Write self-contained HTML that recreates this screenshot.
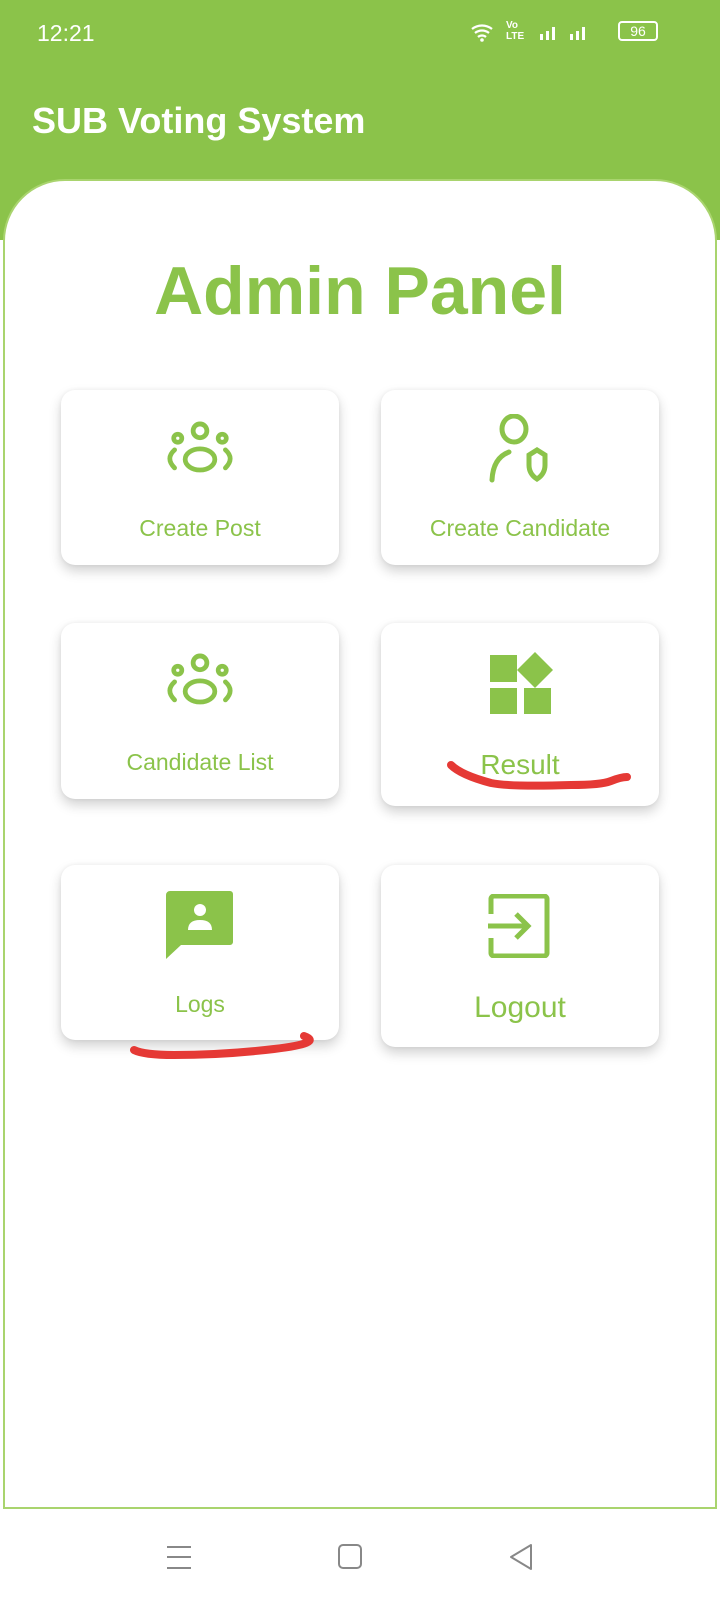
<!DOCTYPE html>
<html><head><meta charset="utf-8"><style>
*{margin:0;padding:0;box-sizing:border-box}
body{width:720px;height:1600px;background:#fff;font-family:"Liberation Sans",Roboto,sans-serif;position:relative;overflow:hidden}
.top{position:absolute;left:0;top:0;width:720px;height:240px;background:#8bc34a}
.time{position:absolute;left:37px;top:20px;color:#fff;font-size:23px}
.title{position:absolute;left:32px;top:100px;color:#fff;font-size:36px;font-weight:bold}
.panel{position:absolute;left:3px;top:179px;width:714px;height:1330px;background:#fff;border:2px solid #a9d46e;border-radius:62px 62px 0 0}
.h{position:absolute;left:0;width:720px;top:252px;text-align:center;color:#8bc34a;font-size:68px;font-weight:bold}
.card{position:absolute;background:#fff;border-radius:14px;box-shadow:0 6px 12px rgba(0,0,0,.18),0 0 4px rgba(0,0,0,.06)}
.lbl{position:absolute;left:0;width:100%;text-align:center;color:#8bc34a;font-size:23px}
svg{position:absolute}
.nav{position:absolute;top:1512px;left:0;width:720px;height:88px;background:#fff}
</style></head><body>
<div class="top"></div>
<div class="time">12:21</div>
<div style="position:absolute;left:470px;top:20px;color:#fff;font-size:13px;font-weight:bold">
<svg style="left:0;top:2px" width="26" height="20" viewBox="0 0 26 20"><path d="M2 7a16 16 0 0 1 20 0M5 11a11 11 0 0 1 14 0M8 15a6 6 0 0 1 8 0" stroke="#fff" stroke-width="2.2" fill="none"/><circle cx="12" cy="18" r="1.8" fill="#fff"/></svg>
<span style="position:absolute;left:36px;top:0;line-height:11px;font-size:10px">Vo<br>LTE</span>
<svg style="left:70px;top:4px" width="60" height="18"><rect x="0" y="10" width="3" height="6" fill="#fff"/><rect x="6" y="7" width="3" height="9" fill="#fff"/><rect x="12" y="3" width="3" height="13" fill="#fff"/><rect x="30" y="10" width="3" height="6" fill="#fff"/><rect x="36" y="7" width="3" height="9" fill="#fff"/><rect x="42" y="3" width="3" height="13" fill="#fff"/></svg>
<div style="position:absolute;left:148px;top:1px;width:40px;height:20px;border:2px solid #fff;border-radius:4px;text-align:center;line-height:16px;font-size:14px;font-weight:normal">96</div>
</div>
<div class="title">SUB Voting System</div>
<div class="panel"></div>
<div class="h">Admin Panel</div>

<div class="card" style="left:61px;top:390px;width:278px;height:175px"><div class="lbl" style="top:125px">Create Post</div></div>
<div class="card" style="left:381px;top:390px;width:278px;height:175px"><div class="lbl" style="top:125px">Create Candidate</div></div>
<div class="card" style="left:61px;top:623px;width:278px;height:176px"><div class="lbl" style="top:126px">Candidate List</div></div>
<div class="card" style="left:381px;top:623px;width:278px;height:183px"><div class="lbl" style="top:126px;font-size:28px">Result</div></div>
<div class="card" style="left:61px;top:865px;width:278px;height:175px"><div class="lbl" style="top:126px">Logs</div></div>
<div class="card" style="left:381px;top:865px;width:278px;height:182px"><div class="lbl" style="top:126px;font-size:30px">Logout</div></div>

<!-- group icons -->
<svg style="left:164px;top:420px" width="72" height="64" viewBox="0 0 68 60"><g stroke="#8bc34a" stroke-width="4.5" fill="none" stroke-linecap="round"><circle cx="34" cy="10" r="6.5"/><circle cx="13" cy="17" r="3.8"/><circle cx="55" cy="17" r="3.8"/><ellipse cx="34" cy="37" rx="14" ry="10"/><path d="M10 28q-9 8 0 17M58 28q9 8 0 17"/></g></svg>
<svg style="left:164px;top:652px" width="72" height="64" viewBox="0 0 68 60"><g stroke="#8bc34a" stroke-width="4.5" fill="none" stroke-linecap="round"><circle cx="34" cy="10" r="6.5"/><circle cx="13" cy="17" r="3.8"/><circle cx="55" cy="17" r="3.8"/><ellipse cx="34" cy="37" rx="14" ry="10"/><path d="M10 28q-9 8 0 17M58 28q9 8 0 17"/></g></svg>
<!-- person shield -->
<svg style="left:484px;top:414px" width="70" height="72" viewBox="0 0 70 72"><g stroke="#8bc34a" stroke-width="5" fill="none" stroke-linecap="round"><ellipse cx="30" cy="15" rx="12" ry="13"/><path d="M25 38q-16 6 -17 28"/><path d="M45 41l8-5 8 5v10q0 9-8 14q-8-5-8-14z"/></g></svg>
<!-- result widget icon -->
<svg style="left:490px;top:652px" width="64" height="64" viewBox="0 0 64 64"><g fill="#8bc34a"><rect x="0" y="3" width="27" height="27"/><rect x="0" y="36" width="27" height="26"/><rect x="34" y="36" width="27" height="26"/><path d="M45 0l18 18-18 18-18-18z"/></g></svg>
<!-- chat person -->
<svg style="left:166px;top:891px" width="70" height="70" viewBox="0 0 70 70"><path d="M4 0h60a3 3 0 0 1 3 3v48a3 3 0 0 1-3 3H15L0 68V4a4 4 0 0 1 4-4z" fill="#8bc34a"/><circle cx="34" cy="19" r="6" fill="#fff"/><path d="M22 39q0-10 12-10t12 10z" fill="#fff"/></svg>
<!-- logout -->
<svg style="left:488px;top:894px" width="66" height="64" viewBox="0 0 66 64"><g stroke="#8bc34a" stroke-width="5" fill="none"><path d="M3 20V5a3 3 0 0 1 3-3h50a3 3 0 0 1 3 3v54a3 3 0 0 1-3 3H6a3 3 0 0 1-3-3V44"/><path d="M0 32h38M28 20l12 12-12 12"/></g></svg>

<!-- red annotations -->
<svg style="left:0;top:0" width="720" height="1600"><g stroke="#e53935" stroke-width="8" fill="none" stroke-linecap="round"><path d="M451 765q10 10 40 18q20 4 80 2q30 0 40-4t16-4"/><path d="M134 1050q10 5 40 5q50 0 100-6t30-13"/></g></svg>

<div class="nav">
<svg style="left:166px;top:32px" width="26" height="26"><g stroke="#888" stroke-width="2"><path d="M1 3h24M1 13h24M1 24h24"/></g></svg>
<svg style="left:337px;top:31px" width="26" height="28"><rect x="2" y="2" width="22" height="23" rx="4" stroke="#888" stroke-width="2" fill="none"/></svg>
<svg style="left:508px;top:31px" width="26" height="28"><path d="M23 2L3 14l20 12z" stroke="#888" stroke-width="2" fill="none" stroke-linejoin="round"/></svg>
</div>
</body></html>
